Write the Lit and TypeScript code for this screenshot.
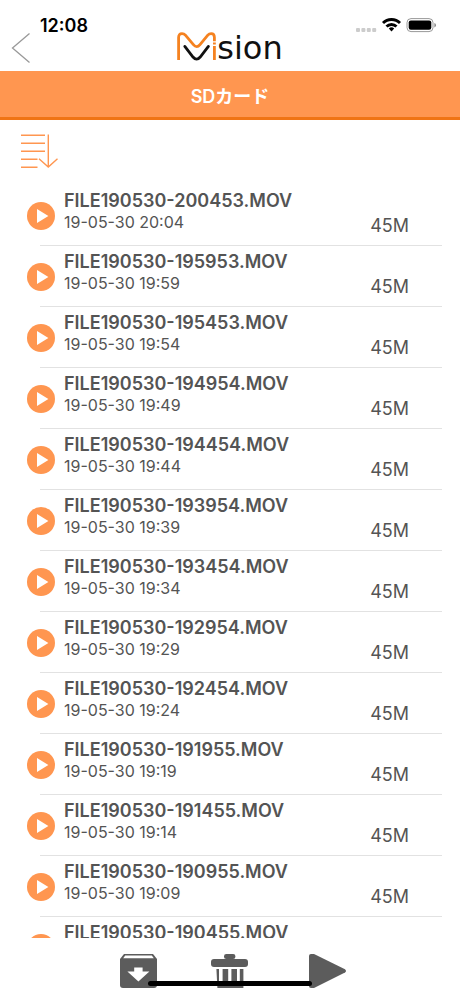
import { LitElement, html, css, svg } from "lit";
import { customElement, property } from "lit/decorators.js";

interface Clip {
  name: string;
  date: string;
  size: string;
}

const clip = (stamp: string, time: string): Clip => ({
  name: `FILE190530-${stamp}.MOV`,
  date: `19-05-30 ${time}`,
  size: "45M",
});

const CLIPS: Clip[] = [
  clip("200453", "20:04"),
  clip("195953", "19:59"),
  clip("195453", "19:54"),
  clip("194954", "19:49"),
  clip("194454", "19:44"),
  clip("193954", "19:39"),
  clip("193454", "19:34"),
  clip("192954", "19:29"),
  clip("192454", "19:24"),
  clip("191955", "19:19"),
  clip("191455", "19:14"),
  clip("190955", "19:09"),
  clip("190455", "19:04"),
];

@customElement("status-bar")
class StatusBar extends LitElement {
  static styles = css`
    :host {
      display: flex;
      justify-content: space-between;
      align-items: center;
      height: 20px;
      padding: 0 20px 0 40px;
      color: #000;
      font: 600 18px/20px Inter, "Liberation Sans", sans-serif;
    }
    svg {
      display: block;
    }
  `;
  render() {
    return html`
      <span>12:08</span>
      <svg width="84" height="20" viewBox="0 0 84 20" aria-hidden="true">
        <g fill="#ccc">
          ${[0, 5.4, 10.8, 16.2].map((x) => svg`<rect x=${x} y="12" width="4" height="4" rx="1"/>`)}
        </g>
        <g fill="none" stroke="#000" stroke-width="2.9">
          <path d="M27 7a12 12 0 0 1 17 0"/>
          <path d="M30.5 10.6a7 7 0 0 1 10 0"/>
        </g>
        <path d="M35.5 15.4l-2.7-2.8a4 4 0 0 1 5.4 0z"/>
        <rect x="51" y="2.6" width="26" height="13" rx="4" fill="none" stroke="#999"/>
        <rect x="52.7" y="4.4" width="22.6" height="9.4" rx="2.2"/>
        <path d="M78.4 7v4.4q1.6-.6 1.6-2.2t-1.6-2.2z" fill="#888"/>
      </svg>
    `;
  }
}

@customElement("clip-row")
class ClipRow extends LitElement {
  @property({ attribute: false }) clip!: Clip;
  static styles = css`
    :host {
      display: grid;
      grid-template-columns: 28px 1fr auto;
      column-gap: 9px;
      height: 61px;
      padding: 0 51px 0 27px;
      box-sizing: border-box;
      color: #545454;
      background: linear-gradient(#e2e2e2, #e2e2e2) 40px 100% / calc(100% - 58px) 1px no-repeat;
      font-family: Inter, "Liberation Sans", sans-serif;
    }
    button {
      align-self: center;
      width: 28px;
      height: 28px;
      padding: 0;
      border: 0;
      background: none;
    }
    svg {
      display: block;
    }
    .text {
      padding-top: 6px;
    }
    .name {
      font-weight: 600;
      font-size: 18px;
      line-height: 20px;
    }
    .date {
      font-size: 16px;
      line-height: 22px;
    }
    .size {
      align-self: end;
      padding-bottom: 8px;
      font-size: 18px;
      line-height: 24px;
    }
  `;
  render() {
    return html`
      <button aria-label="Play ${this.clip.name}">
        <svg width="28" height="28" viewBox="0 0 28 28">
          <circle cx="14" cy="14" r="14" fill="#ff9650"/>
          <path d="M10 7v14l11.4-7z" fill="#fff"/>
        </svg>
      </button>
      <div class="text">
        <div class="name">${this.clip.name}</div>
        <div class="date">${this.clip.date}</div>
      </div>
      <div class="size">${this.clip.size}</div>
    `;
  }
}

@customElement("app-root")
class AppRoot extends LitElement {
  static styles = css`
    :host {
      display: flex;
      flex-direction: column;
      position: relative;
      height: 100vh;
      background: #fff;
      font-family: Inter, "Noto Sans CJK JP", sans-serif;
    }
    status-bar {
      position: absolute;
      top: 16px;
      left: 0;
      right: 0;
    }
    button {
      padding: 0;
      border: 0;
      background: none;
    }
    svg {
      display: block;
    }
    header {
      display: grid;
      grid-template-columns: 40px 1fr 40px;
      height: 71px;
      padding: 32px 0 7px;
      box-sizing: border-box;
    }
    .back {
      padding-left: 11px;
      align-self: start;
    }
    .logo {
      display: flex;
      justify-content: center;
      align-items: flex-start;
    }
    .word {
      color: #111;
      font: 32px/32px "DejaVu Sans", sans-serif;
    }
    h1 {
      margin: 0;
      padding: 6px 0 0;
      height: 49px;
      box-sizing: border-box;
      border-bottom: 3px solid #f07414;
      background: #ff9650;
      color: #fff;
      text-align: center;
      font-size: 18px;
      line-height: 40px;
      font-weight: 600;
    }
    .tools {
      padding: 13px 20px 12px;
    }
    main {
      flex: 1;
      min-height: 0;
      overflow: hidden;
    }
    footer {
      display: flex;
      justify-content: center;
      gap: 54px;
      height: 58px;
      padding: 16px 0 0 6px;
      box-sizing: border-box;
    }
    footer button {
      align-self: start;
    }
    .home {
      position: absolute;
      left: 50%;
      bottom: 10px;
      width: 164px;
      height: 5px;
      margin-left: -82px;
      border-radius: 3px;
      background: #000;
    }
  `;
  render() {
    return html`
      <header>
        <button class="back" aria-label="Back">
          <svg width="20" height="32" viewBox="0 0 20 32" fill="none" stroke="#999" stroke-width="1.3">
            <path d="M18.5 1.5L1.5 16l17 14.5"/>
          </svg>
        </button>
        <div class="logo">
          <svg width="40" height="29" viewBox="0 0 40 29" fill="none" stroke-width="2.8">
            <path stroke="#f58220" d="M1.6 28V5.6Q1.6 1.6 5 1.6Q7 1.6 8.4 3.2L16.4 12.6Q19.7 16.6 23 12.6L30.8 3.2Q32.2 1.6 34.2 1.6Q37.4 1.6 37.4 5.4V9.2M37.4 10.6V12.6M37.4 14V28"/>
            <path stroke="#111" stroke-linecap="round" d="M7.8 14.4L16 25Q19.6 29.2 23.2 25L31.4 14.4"/>
          </svg>
          <span class="word">sion</span>
        </div>
      </header>
      <h1>SDカード</h1>
      <div class="tools">
        <button aria-label="Sort">
          <svg width="38" height="36" viewBox="0 0 38 36" fill="none" stroke="#ff9650" stroke-width="1.4">
            <path d="M1 2.3H25M1 10.3H25M1 18.2H25M1 26.2H17.5M1 34.2H17.5"/>
            <path d="M28.3 1.5V33.5M19 25.8L28.3 34L37.5 25.8"/>
          </svg>
        </button>
      </div>
      <main>${CLIPS.map((c) => html`<clip-row .clip=${c}></clip-row>`)}</main>
      <footer>
        <button aria-label="Download">
          <svg width="37" height="34" viewBox="0 0 37 34">
            <path fill="#5c5c5c" d="M4 0H33L37 5V31Q37 34 34 34H3Q0 34 0 31V5Z"/>
            <path fill="#fff" d="M5.2 1.4H31.8L33.8 4.2H3.2Z"/>
            <path fill="#fff" d="M14.2 13.4H22.6V17.6H29.4L18.4 27.6L7.4 17.6H14.2Z"/>
          </svg>
        </button>
        <button aria-label="Delete">
          <svg width="37" height="34" viewBox="0 0 37 34" fill="#5c5c5c">
            <rect x="13" width="11.4" height="5" rx="2.3"/>
            <rect y="5" width="37" height="8" rx="3"/>
            <path d="M5.4 15H8V34H6.4ZM11.6 15H17.2V34H11.6ZM20.4 15H26V34H20.4ZM28.8 15H32.4V34H28.8ZM6 27H32V34H7Z"/>
          </svg>
        </button>
        <button aria-label="Play">
          <svg width="44" height="34" viewBox="0 0 44 34">
            <path fill="#5c5c5c" d="M7 2Q7 0 9 0H12L43 15.2Q45 17 43 18.6L12 34H9Q7 34 7 32Z"/>
          </svg>
        </button>
      </footer>
      <status-bar></status-bar>
      <div class="home"></div>
    `;
  }
}
